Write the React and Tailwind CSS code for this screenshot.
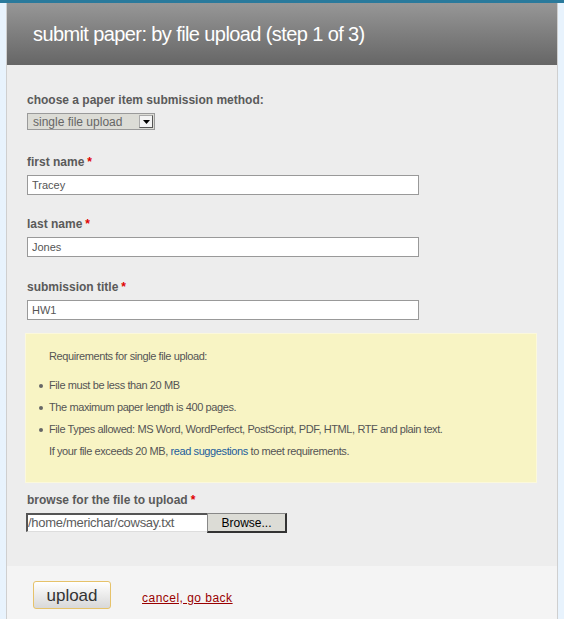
export default function App() {
  const font = { fontFamily: '"Liberation Sans", Arial, sans-serif' };
  return (
    <div
      className="min-h-[619px] w-[564px] bg-gradient-to-r from-[#e8f3fd] via-[#f4f9ff] to-[#e8f3fd] border-t-[3px] border-[#2a7a9c]"
      style={font}
    >
      <div className="ml-[6px] w-[552px] border-x border-[#cfcfcf] bg-[#ededed]">
        {/* header */}
        <div className="h-[62px] bg-gradient-to-b from-[#979797] to-[#666666] flex items-center pl-[26px]">
          <h1 className="text-[20px] text-white leading-none pb-[1px] tracking-[-0.6px]">
            submit paper: by file upload (step 1 of 3)
          </h1>
        </div>

        {/* form body */}
        <div className="px-[20px] pt-[28px] pb-[33px]">
          <Label text="choose a paper item submission method:" />
          <div className="mt-[6px] flex w-[128px] h-[17px] border border-[#9a9a9a] bg-[#dcdcd6] items-center">
            <span className="flex-1 pl-[5px] text-[12px] text-[#666] leading-none">single file upload</span>
            <span className="mr-[1px] w-[14px] h-[13px] bg-[#f4f4f4] border border-[#aaa] border-r-[#555] border-b-[#555] flex items-center justify-center">
              <svg width="7" height="4" viewBox="0 0 7 4">
                <path d="M0 0h7L3.5 4z" fill="#000" />
              </svg>
            </span>
          </div>

          <Field label="first name" value="Tracey" mt="mt-[25px]" />
          <Field label="last name" value="Jones" mt="mt-[22px]" />
          <Field label="submission title" value="HW1" mt="mt-[23px]" />

          {/* requirements box */}
          <div className="mt-[13px] -ml-[2px] w-[512px] h-[150px] bg-[#f8f4c4] border border-[#fbf8dc] text-[11px] leading-[13px] tracking-[-0.4px] text-[#555] pl-[23px] pt-[16px]">
            <p>Requirements for single file upload:</p>
            <ul className="mt-[16px] space-y-[9px]">
              <li className="relative">
                <span className="absolute -left-[10px] top-[5px] w-[4px] h-[4px] rounded-full bg-[#666]" />
                File must be less than 20 MB
              </li>
              <li className="relative">
                <span className="absolute -left-[10px] top-[5px] w-[4px] h-[4px] rounded-full bg-[#666]" />
                The maximum paper length is 400 pages.
              </li>
              <li className="relative">
                <span className="absolute -left-[10px] top-[5px] w-[4px] h-[4px] rounded-full bg-[#666]" />
                File Types allowed: MS Word, WordPerfect, PostScript, PDF, HTML, RTF and plain text.
              </li>
            </ul>
            <p className="mt-[9px]">
              If your file exceeds 20 MB, <a className="text-[#1d5d9b]">read suggestions</a> to meet requirements.
            </p>
          </div>

          <div className="mt-[10px]">
            <Label text="browse for the file to upload" req />
          </div>
          <div className="mt-[6px] -ml-[1px] flex">
            <div className="w-[181px] h-[19px] bg-white border-l-2 border-t-2 border-[#555] border-b border-b-[#ddd] flex items-center text-[13px] tracking-[-0.3px] text-[#5c5c5c] overflow-hidden whitespace-nowrap">
              /home/merichar/cowsay.txt
            </div>
            <button className="w-[80px] h-[20px] bg-[#dcdcd6] border border-[#888] border-r-2 border-b-2 border-r-[#333] border-b-[#333] text-[12px] text-black leading-none">
              Browse...
            </button>
          </div>
        </div>

        {/* footer */}
        <div className="bg-[#f4f4f4] h-[60px] flex items-start pt-[15px] pl-[26px]">
          <button className="w-[78px] h-[28px] rounded-[3px] border border-[#e6c26a] bg-gradient-to-b from-[#ffffff] to-[#d8d8d8] text-[17px] text-[#333] leading-none">
            upload
          </button>
          <a className="ml-[31px] mt-[8px] text-[12px] text-[#990000] underline tracking-[0.04em]">cancel, go back</a>
        </div>
      </div>
    </div>
  );
}

function Label({ text, req }) {
  return (
    <div className="text-[12px] font-bold text-[#5a5a5a] leading-[14px]">
      {text}
      {req && <span className="text-[#e00000] ml-[3px]">*</span>}
    </div>
  );
}

function Field({ label, value, mt }) {
  return (
    <div className={mt}>
      <Label text={label} req />
      <input
        readOnly
        value={value}
        className="mt-[6px] block w-[392px] h-[20px] bg-white border border-[#999] px-[4px] text-[11px] text-[#555] outline-none"
      />
    </div>
  );
}
